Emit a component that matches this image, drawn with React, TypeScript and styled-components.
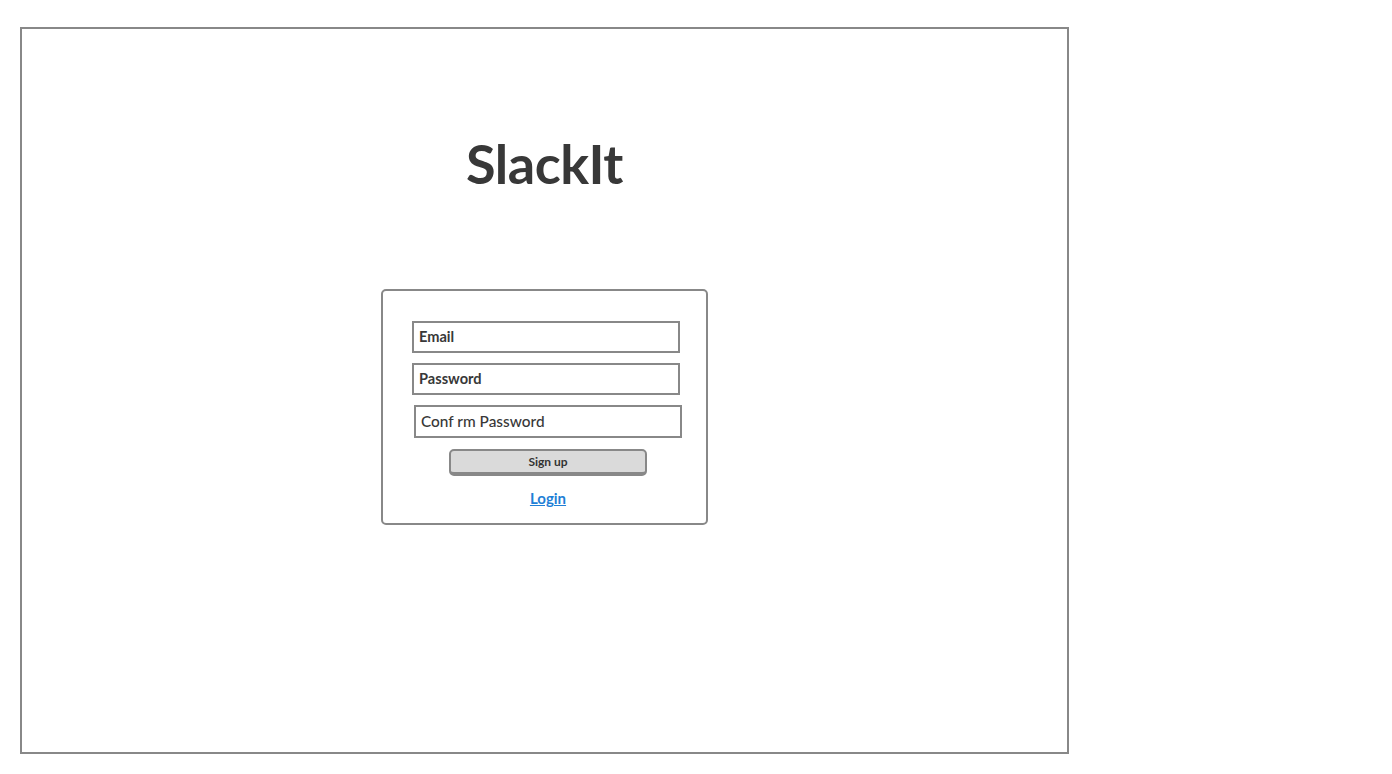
import React from "react";
import styled, { createGlobalStyle } from "styled-components";

const Global = createGlobalStyle`
  html, body { margin: 0; padding: 0; background: #fff; }
  body { font-family: Lato, "Open Sans", sans-serif; color: #333; }
`;

const Page = styled.div`
  width: 1392px;
  height: 774px;
  padding: 27px 0 0 20px;
  box-sizing: border-box;
`;

const Frame = styled.div`
  width: 1049px;
  height: 727px;
  box-sizing: border-box;
  border: 2px solid #888;
  display: flex;
  flex-direction: column;
  align-items: center;
`;

const Title = styled.h1`
  margin: 103px 0 0 0;
  font-family: Lato, sans-serif;
  font-size: 54px;
  line-height: 64px;
  font-weight: 700;
  color: #383838;
  letter-spacing: -0.5px;
`;

const Card = styled.div`
  margin-top: 93px;
  width: 327px;
  height: 236px;
  box-sizing: border-box;
  border: 2px solid #888;
  border-radius: 5px;
  display: flex;
  flex-direction: column;
  align-items: flex-start;
  padding: 30px 26px 0 29px;
`;

const Field = styled.div<{ $shift: number; $big?: boolean; $h: number }>`
  margin-left: ${(p) => p.$shift}px;
  margin-bottom: 10px;
  width: 268px;
  height: ${(p) => p.$h}px;
  box-sizing: border-box;
  border: 2px solid #888;
  display: flex;
  align-items: center;
  padding: 0 0 2px 5px;
  font-size: ${(p) => (p.$big ? 15.4 : 14.6)}px;
  font-weight: ${(p) => (p.$big ? 500 : 700)};
  color: #383838;
`;

const Button = styled.button`
  margin: 1px 0 0 37px;
  width: 198px;
  height: 27px;
  box-sizing: border-box;
  border: 2px solid #888;
  border-bottom-width: 4px;
  border-radius: 5px;
  background: #dadada;
  font-family: Lato, sans-serif;
  font-size: 12px;
  font-weight: 700;
  color: #333;
  padding: 0;
  display: flex;
  align-items: center;
  justify-content: center;
`;

const LoginLink = styled.a`
  margin: 13px 0 0 4px;
  align-self: center;
  font-size: 15px;
  font-weight: 700;
  color: #1f7fd6;
  text-decoration: underline;
  cursor: pointer;
`;

export default function App() {
  return (
    <Page>
      <Global />
      <Frame>
        <Title>SlackIt</Title>
        <Card>
          <Field $shift={0} $h={32}>Email</Field>
          <Field $shift={0} $h={32}>Password</Field>
          <Field $shift={2} $h={33} $big>Conf rm Password</Field>
          <Button>Sign up</Button>
          <LoginLink>Login</LoginLink>
        </Card>
      </Frame>
    </Page>
  );
}
